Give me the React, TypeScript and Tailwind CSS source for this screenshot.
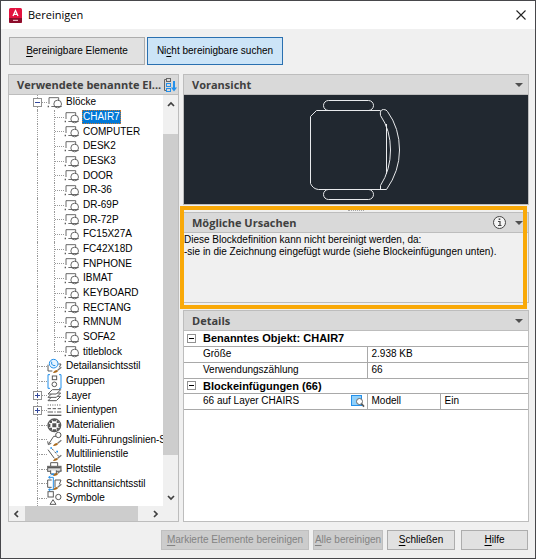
import React from "react";

type IconName =
  | "block"
  | "detail"
  | "group"
  | "layer"
  | "linetype"
  | "material"
  | "mleader"
  | "mline"
  | "plot"
  | "section"
  | "shape";

type Node = {
  label: string;
  icon: IconName;
  level: 1 | 2;
  toggle?: "plus" | "minus";
  selected?: boolean;
  last?: boolean;
};

const blocks = [
  "CHAIR7",
  "COMPUTER",
  "DESK2",
  "DESK3",
  "DOOR",
  "DR-36",
  "DR-69P",
  "DR-72P",
  "FC15X27A",
  "FC42X18D",
  "FNPHONE",
  "IBMAT",
  "KEYBOARD",
  "RECTANG",
  "RMNUM",
  "SOFA2",
  "titleblock",
];

const nodes: Node[] = [
  { label: "Blöcke", icon: "block", level: 1, toggle: "minus" },
  ...blocks.map(
    (label, i): Node => ({
      label,
      icon: "block",
      level: 2,
      selected: i === 0,
      last: i === blocks.length - 1,
    })
  ),
  { label: "Detailansichtsstil", icon: "detail", level: 1 },
  { label: "Gruppen", icon: "group", level: 1 },
  { label: "Layer", icon: "layer", level: 1, toggle: "plus" },
  { label: "Linientypen", icon: "linetype", level: 1, toggle: "plus" },
  { label: "Materialien", icon: "material", level: 1 },
  { label: "Multi-Führungslinien-St", icon: "mleader", level: 1 },
  { label: "Multilinienstile", icon: "mline", level: 1 },
  { label: "Plotstile", icon: "plot", level: 1 },
  { label: "Schnittansichtsstil", icon: "section", level: 1 },
  { label: "Symbole", icon: "shape", level: 1 },
];

function Brush() {
  return (
    <g>
      <path d="M43 25 L32 34" stroke="#777" strokeWidth="4" />
      <path d="M18 42 Q22 33 31 33 L33 37 Q28 43 18 42 Z" fill="#a8681c" stroke="none" />
    </g>
  );
}

const drawings: Record<IconName, React.ReactNode> = {
  block: (
    <g strokeWidth="2.7">
      <path d="M6 27 V8 H35 V18" />
      <path d="M13 34.5 H44" />
      <path d="M2 34.5 H6" strokeWidth="4" />
      <circle cx="32" cy="27" r="11.5" />
    </g>
  ),
  detail: (
    <g>
      <path d="M3 17 V36 H16" />
      <path d="M34 15 H42 L37 25" />
      <circle cx="20" cy="14" r="13" fill="#e6f4ff" stroke="#2490ea" />
      <path d="M14 8 V15 Q15 20 25 20" stroke="#2490ea" />
      <Brush />
    </g>
  ),
  group: (
    <g>
      <path d="M9 2 H3 V43 H9 M36 2 H42 V43 H36" stroke="#2490ea" />
      <rect x="16" y="6" width="13" height="11" />
      <circle cx="22" cy="31" r="7" />
    </g>
  ),
  layer: (
    <g fill="#fff">
      <path d="M3 38 L16 25 H41 L28 38 Z" />
      <path d="M3 28 L16 15 H41 L28 28 Z" />
      <path d="M3 18 L16 5 H41 L28 18 Z" />
    </g>
  ),
  linetype: (
    <g>
      <path d="M2 6 H43" strokeDasharray="3 4" />
      <path d="M2 17 H43" strokeDasharray="10 5" />
      <path d="M2 27 H43" strokeDasharray="16 4 4 4" />
      <path d="M2 37 H43" strokeWidth="4" />
    </g>
  ),
  material: (
    <g>
      <circle cx="22" cy="22" r="19" strokeWidth="4" />
      <path
        d="M16 16 H28 V28 H16 Z M17 4 H27 V10 H17 Z M17 34 H27 V40 H17 Z M4 17 H10 V27 H4 Z M34 17 H40 V27 H34 Z M9 9 L15 8 V15 H8 Z M29 8 L35 9 L36 15 H29 Z M8 29 H15 V36 L9 35 Z M29 29 H36 L35 35 L29 36 Z"
        fill="#555"
        stroke="none"
      />
    </g>
  ),
  mleader: (
    <g>
      <circle cx="34" cy="9" r="8" />
      <path d="M27 13 H20 L5 36" />
      <path d="M2 28 L4 38 L13 34" />
      <Brush />
    </g>
  ),
  mline: (
    <g>
      <path d="M3 8 L22 34" />
      <path d="M15 5 L36 29" strokeDasharray="7 5" />
      <path d="M10 3 H15 M28 14 H33" stroke="#2490ea" strokeWidth="5" />
      <Brush />
    </g>
  ),
  plot: (
    <g>
      <path d="M11 13 V2 H32 V13" fill="#fff" />
      <rect x="2" y="13" width="40" height="15" fill="#ddd" />
      <path d="M3 17 H41" strokeWidth="4" />
      <path d="M11 25 V36 H28 V25" fill="#fff" />
      <path d="M13 37 H21" stroke="#2490ea" strokeWidth="5" />
      <Brush />
    </g>
  ),
  section: (
    <g>
      <path d="M14 12 H2 V34 H14" />
      <path d="M24 34 V12 H42 L37 25" />
      <path d="M19 4 V41 M19 4 H5 M19 41 H5 M10 0 L5 4 L10 8 M10 37 L5 41 L10 45" stroke="#2490ea" />
      <Brush />
    </g>
  ),
  shape: (
    <g>
      <rect x="3" y="2" width="16" height="16" />
      <circle cx="34" cy="18" r="8" />
      <path d="M9 40 L18 26 L27 40 Z" />
    </g>
  ),
};

function TreeIcon({ name }: { name: IconName }) {
  return (
    <svg
      viewBox="0 0 45 45"
      className="size-[15px] shrink-0 overflow-visible"
      fill="none"
      stroke="#5a5a5a"
      strokeWidth="3"
      aria-hidden="true"
    >
      {drawings[name]}
    </svg>
  );
}

function Toggle({ kind }: { kind: "plus" | "minus" }) {
  return (
    <button
      type="button"
      aria-label={kind === "plus" ? "Erweitern" : "Reduzieren"}
      className="relative z-10 grid size-[9px] shrink-0 place-items-center border border-[#919191] bg-white"
    >
      <svg viewBox="0 0 7 7" className="size-[7px]" stroke="#33489c" aria-hidden="true">
        <path d="M1 3.5 H6" />
        {kind === "plus" && <path d="M3.5 1 V6" />}
      </svg>
    </button>
  );
}

function TreeRow({ node }: { node: Node }) {
  return (
    <li
      role="treeitem"
      aria-selected={!!node.selected}
      className="flex min-h-0 flex-1 items-center pl-[24px] whitespace-nowrap"
    >
      <span className="relative flex w-[9px] shrink-0 items-center self-stretch">
        <span className="absolute inset-y-0 left-1 border-l border-dotted border-[#999]" />
        {node.toggle && <Toggle kind={node.toggle} />}
        {!node.toggle && node.level === 1 && (
          <span className="ml-1 w-[5px] border-t border-dotted border-[#999]" />
        )}
      </span>
      {node.level === 1 ? (
        <span className="w-[5px] shrink-0 border-t border-dotted border-[#999]" />
      ) : (
        <span className="ml-3 flex w-[10px] shrink-0 items-center self-stretch">
          <span
            className={
              node.last
                ? "h-1/2 self-start border-l border-dotted border-[#999]"
                : "self-stretch border-l border-dotted border-[#999]"
            }
          />
          <span className="flex-1 border-t border-dotted border-[#999]" />
        </span>
      )}
      <TreeIcon name={node.icon} />
      <span
        className={
          node.selected
            ? "ml-[3px] bg-[#0078d7] px-px leading-[14px] text-white outline-1 -outline-offset-1 outline-dotted outline-[#c8782f]"
            : "ml-[3px] px-px leading-[14px]"
        }
      >
        {node.label}
      </span>
    </li>
  );
}

function Chevron({ dir }: { dir: "up" | "down" | "left" | "right" }) {
  const paths = {
    up: "M1 6 L4 3 L7 6",
    down: "M1 2 L4 5 L7 2",
    left: "M5 1 L2 4 L5 7",
    right: "M3 1 L6 4 L3 7",
  };
  return (
    <svg viewBox="0 0 8 8" className="size-2" fill="none" stroke="#404040" strokeWidth="1.7" aria-hidden="true">
      <path d={paths[dir]} />
    </svg>
  );
}

function Header({ title, children }: { title: string; children?: React.ReactNode }) {
  return (
    <div className="flex h-[21px] shrink-0 items-center border border-[#bdbdbd] bg-[#d9d9d9] pr-[5px] pl-2">
      <h2 className="min-w-0 flex-1 font-['Open_Sans','Noto_Sans',sans-serif] text-[11px] leading-[18px] font-bold whitespace-nowrap text-[#404040]">
        {title}
      </h2>
      {children}
    </div>
  );
}

function Collapse() {
  return (
    <button type="button" aria-label="Bereich einklappen" className="grid h-4 w-2 shrink-0 place-items-center">
      <svg viewBox="0 0 8 4" className="h-1 w-2" fill="#505050" aria-hidden="true">
        <path d="M0 0 H8 L4 4 Z" />
      </svg>
    </button>
  );
}

function Splitter() {
  return (
    <div className="flex h-[7px] shrink-0 items-end justify-center pb-px">
      <span className="w-4 border-t border-dotted border-[#a5a5a5]" />
    </div>
  );
}

function Chair() {
  return (
    <svg
      viewBox="0 0 344 108"
      className="h-[108px] w-[344px]"
      fill="none"
      stroke="#e8eaec"
      strokeWidth="1"
      role="img"
      aria-label="CHAIR7"
    >
      <rect x="139.5" y="4.5" width="50" height="10" rx="5" />
      <rect x="139.5" y="93.5" width="50" height="10" rx="5" />
      <path d="M196.5 14.5 H132.5 L126.5 20.5 V87.5 Q129 93 134.5 93.5 H199" />
      <path d="M202.5 28 V78" />
      <path d="M196.5 19.5 Q195.5 13.5 199.5 13.5 Q202.5 13.5 203.5 15.5 Q215.5 32 215.5 54 Q215.5 75 202.5 93.5 H196.5 V89.5 Q206.5 74 206.5 54 Q206.5 34 196.5 19.5 Z" />
    </svg>
  );
}

function FooterButton({
  first,
  rest,
  width,
  disabled,
}: {
  first: string;
  rest: string;
  width: string;
  disabled?: boolean;
}) {
  return (
    <button
      type="button"
      disabled={disabled}
      className={`${width} h-5 border border-[#adadad] bg-[#e1e1e1] whitespace-nowrap text-black disabled:border-[#bfbfbf] disabled:bg-[#cccccc] disabled:text-[#838383]`}
    >
      <u className="underline-offset-2">{first}</u>
      {rest}
    </button>
  );
}

function GroupRow({ title }: { title: string }) {
  return (
    <tr className="h-[15px] border-b border-[#a9a9a9]">
      <th colSpan={4} scope="colgroup" className="p-0 text-left font-bold">
        <div className="flex h-[14px] items-center gap-[7px] pl-[3px]">
          <button
            type="button"
            aria-label="Reduzieren"
            className="grid size-[9px] place-items-center border border-[#919191] bg-white"
          >
            <span className="w-[5px] border-t border-black" />
          </button>
          <span className="text-[11px] text-black">{title}</span>
        </div>
      </th>
    </tr>
  );
}

export default function App() {
  return (
    <div className="flex h-screen min-h-[480px] flex-col border border-[#47474b] bg-[#f0f0f0] font-['Liberation_Sans',Arial,sans-serif] text-[10px] leading-[12px] text-black">
      <header className="flex h-7 shrink-0 items-center bg-white pr-2 pl-2">
        <svg viewBox="0 0 13 15" className="mr-[6px] h-[15px] w-[13px]" aria-hidden="true">
          <rect width="13" height="15" rx="1.5" fill="#e3123f" />
          <path d="M0 10 H13 V13.5 Q13 15 11.5 15 H1.5 Q0 15 0 13.5 Z" fill="#8c0d2b" />
          <path d="M4 8 L6.5 2.5 L9 8 M5 6.3 H8" fill="none" stroke="#fff" strokeWidth="1.3" />
          <path d="M4 12.4 H9" stroke="#e9b6c1" strokeWidth="1.2" />
        </svg>
        <h1 className="flex-1 font-['Open_Sans','Noto_Sans',sans-serif] text-[11px] text-black">Bereinigen</h1>
        <button type="button" aria-label="Schließen" className="grid size-3 place-items-center">
          <svg viewBox="0 0 10 10" className="size-[10px]" stroke="#222" strokeWidth="1.1" aria-hidden="true">
            <path d="M0.5 0.5 L9.5 9.5 M9.5 0.5 L0.5 9.5" />
          </svg>
        </button>
      </header>

      <div className="flex shrink-0 gap-[2px] px-2 pt-2 pb-[9px]">
        <button type="button" className="h-7 w-[136px] border border-[#adadad] bg-[#e1e1e1] whitespace-nowrap">
          <u className="underline-offset-2">B</u>ereinigbare Elemente
        </button>
        <button type="button" className="h-7 w-[136px] border border-[#2a70b0] bg-[#cce4f7] whitespace-nowrap">
          Ni<u className="underline-offset-2">c</u>ht bereinigbare suchen
        </button>
      </div>

      <main className="flex min-h-0 flex-1 gap-1 pr-[6px] pl-[7px]">
        <section className="flex w-[171px] shrink-0 flex-col">
          <Header title="Verwendete benannte El...">
            <button type="button" aria-label="Sortieren" className="-mr-1 size-[14px] shrink-0">
              <svg viewBox="0 0 14 14" className="size-[14px]" fill="none" aria-hidden="true">
                <path d="M3 1.5 H1.5 V12.5 H3" stroke="#666" />
                <rect x="3.5" y="0.5" width="4" height="3" stroke="#666" />
                <rect x="3.5" y="5.5" width="4" height="3" stroke="#2490ea" />
                <rect x="3.5" y="10.5" width="4" height="3" stroke="#2490ea" />
                <path d="M11 3 V11" stroke="#2490ea" strokeWidth="2" />
                <path d="M8 9.5 H14 L11 13.5 Z" fill="#2490ea" />
              </svg>
            </button>
          </Header>
          <div className="flex min-h-0 flex-1 flex-col border border-t-0 border-[#bdbdbd]">
            <div className="flex min-h-0 flex-1">
              <ul role="tree" className="flex min-w-0 flex-1 flex-col overflow-hidden bg-white">
                {nodes.map((n) => (
                  <TreeRow key={n.label} node={n} />
                ))}
              </ul>
              <div className="flex w-[15px] shrink-0 flex-col items-center">
                <button type="button" aria-label="Nach oben" className="grid h-[17px] place-items-center">
                  <Chevron dir="up" />
                </button>
                <div className="flex w-full flex-1 flex-col">
                  <div className="flex-[22]" />
                  <div className="flex-[322] bg-[#cdcdcd]" />
                  <div className="flex-[34]" />
                </div>
                <button type="button" aria-label="Nach unten" className="grid h-[17px] place-items-center">
                  <Chevron dir="down" />
                </button>
              </div>
            </div>
            <div className="flex h-[15px] shrink-0 pr-[15px]">
              <button type="button" aria-label="Nach links" className="grid w-4 place-items-center">
                <Chevron dir="left" />
              </button>
              <div className="flex flex-1">
                <div className="flex-[113] bg-[#cdcdcd]" />
                <div className="flex-[9]" />
              </div>
              <button type="button" aria-label="Nach rechts" className="grid w-4 place-items-center">
                <Chevron dir="right" />
              </button>
            </div>
          </div>
        </section>

        <div className="flex min-w-0 flex-1 flex-col">
          <section className="shrink-0">
            <Header title="Voransicht">
              <Collapse />
            </Header>
            <div className="flex h-[110px] items-center justify-center overflow-hidden border border-t-0 border-[#bdbdbd] bg-[#212830]">
              <Chair />
            </div>
          </section>
          <Splitter />

          <section className="relative shrink-0">
            <Header title="Mögliche Ursachen">
              <button type="button" aria-label="Info" className="mr-[9px] size-[13px] shrink-0">
                <svg viewBox="0 0 13 13" className="size-[13px]" fill="none" stroke="#444" aria-hidden="true">
                  <circle cx="6.5" cy="6.5" r="6" fill="#f4f4f4" />
                  <path d="M5 5.5 H7 V9.5 M5 9.5 H8.5" strokeWidth="1.2" />
                  <path d="M5.7 3.2 H7.3" strokeWidth="1.5" />
                </svg>
              </button>
              <Collapse />
            </Header>
            <div className="h-[70px] border border-t-0 border-[#bdbdbd] pt-px whitespace-nowrap">
              <p>Diese Blockdefinition kann nicht bereinigt werden, da:</p>
              <p>-sie in die Zeichnung eingefügt wurde (siehe Blockeinfügungen unten).</p>
            </div>
            <div className="pointer-events-none absolute -top-[6px] right-[2px] -bottom-[6px] -left-[3px] border-4 border-[#f9a908]" />
          </section>
          <Splitter />

          <section className="flex min-h-0 flex-1 flex-col">
            <Header title="Details">
              <Collapse />
            </Header>
            <div className="min-h-0 flex-1 overflow-hidden border border-t-0 border-[#bdbdbd] bg-white">
              <table className="w-full table-fixed border-collapse">
                <colgroup>
                  <col />
                  <col className="w-[17px]" />
                  <col className="w-[73px]" />
                  <col className="w-[87px]" />
                </colgroup>
                <tbody>
                  <GroupRow title="Benanntes Objekt: CHAIR7" />
                  <tr className="h-4 border-b border-[#a9a9a9]">
                    <th colSpan={2} scope="row" className="py-0 pr-0 pl-[19px] text-left font-normal">Größe</th>
                    <td colSpan={2} className="border-l border-[#a9a9a9] py-0 pr-0 pl-[3px]">2.938 KB</td>
                  </tr>
                  <tr className="h-4 border-b border-[#a9a9a9]">
                    <th colSpan={2} scope="row" className="py-0 pr-0 pl-[19px] text-left font-normal">Verwendungszählung</th>
                    <td colSpan={2} className="border-l border-[#a9a9a9] py-0 pr-0 pl-[3px]">66</td>
                  </tr>
                  <GroupRow title="Blockeinfügungen (66)" />
                  <tr className="h-4 border-b border-[#a9a9a9]">
                    <th scope="row" className="py-0 pr-0 pl-[19px] text-left font-normal">66 auf Layer CHAIRS</th>
                    <td className="p-0">
                      <button type="button" aria-label="Zoom" className="block size-[14px]">
                        <svg viewBox="0 0 14 14" className="size-[14px]" fill="none" aria-hidden="true">
                          <rect x="0.5" y="1.5" width="10" height="10" fill="#8fd0fb" stroke="#2490ea" />
                          <circle cx="8.5" cy="7.5" r="3" fill="#fff" stroke="#666" />
                          <path d="M10.5 9.8 L13 12.6" stroke="#555" strokeWidth="1.6" />
                        </svg>
                      </button>
                    </td>
                    <td className="border-l border-[#a9a9a9] py-0 pr-0 pl-[3px]">Modell</td>
                    <td className="border-l border-[#a9a9a9] py-0 pr-0 pl-[3px]">Ein</td>
                  </tr>
                </tbody>
              </table>
            </div>
          </section>
        </div>
      </main>

      <footer className="flex shrink-0 justify-end pt-2 pr-[7px] pb-2">
        <FooterButton first="M" rest="arkierte Elemente bereinigen" width="mr-[4px] w-[148px]" disabled />
        <FooterButton first="A" rest="lle bereinigen" width="mr-[4px] w-[70px]" disabled />
        <FooterButton first="S" rest="chließen" width="mr-[6px] w-[68px]" />
        <FooterButton first="H" rest="ilfe" width="w-[67px]" />
      </footer>
    </div>
  );
}
